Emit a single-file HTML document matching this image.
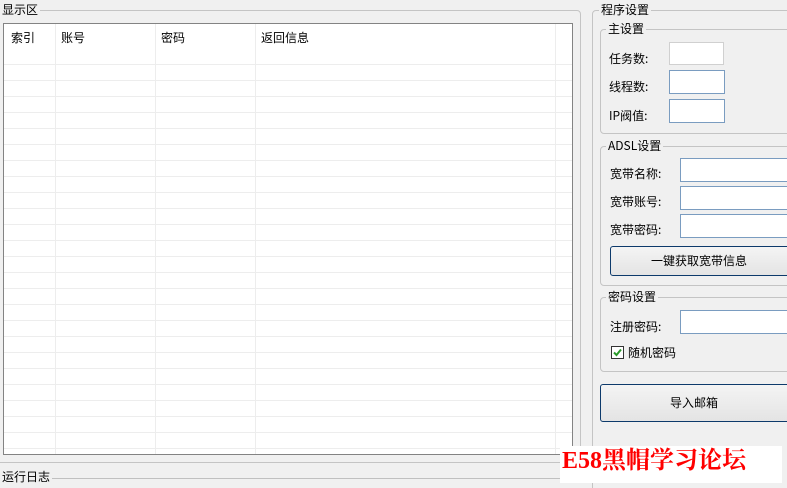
<!DOCTYPE html>
<html style="width:787px;height:488px;overflow:hidden"><head><meta charset="utf-8"><style>
*{margin:0;padding:0;box-sizing:border-box}
body{width:787px;height:488px;background:#f0f0f0;position:relative;overflow:hidden;font-family:"SimSun","Noto Sans CJK SC","WenQuanYi Zen Hei",sans-serif;font-size:12px;color:#000}
.a{position:absolute}
.grp{position:absolute;border:1px solid #c4c4c4;border-radius:4px}
.lbl{position:absolute;background:#f0f0f0;padding:0 2px;font-size:12px;line-height:14px}
.inp{position:absolute;background:#fff;border:1px solid #7a9cc0}
.btn{position:absolute;border:1px solid #0d3a6b;border-radius:3px;background:linear-gradient(#f4f4f4,#e4e4e4);text-align:center;font-size:12px}
.t{position:absolute;font-size:12px;line-height:14px}
</style></head><body>
<div class="grp" style="left:-5px;top:10px;width:586px;height:453px;border-radius:0 4px 4px 0"></div>
<div class="lbl" style="left:0;top:3px">显示区</div>
<div class="a" style="left:3px;top:23px;width:570px;height:432px;background:#fff;border:1px solid #838383;overflow:hidden">
<svg class="a" style="left:0;top:0" width="570" height="432">
<g stroke="#ededed">
<line x1="0" x2="570" y1="40.5" y2="40.5"/><line x1="0" x2="570" y1="56.5" y2="56.5"/><line x1="0" x2="570" y1="72.5" y2="72.5"/><line x1="0" x2="570" y1="88.5" y2="88.5"/><line x1="0" x2="570" y1="104.5" y2="104.5"/><line x1="0" x2="570" y1="120.5" y2="120.5"/><line x1="0" x2="570" y1="136.5" y2="136.5"/><line x1="0" x2="570" y1="152.5" y2="152.5"/><line x1="0" x2="570" y1="168.5" y2="168.5"/><line x1="0" x2="570" y1="184.5" y2="184.5"/><line x1="0" x2="570" y1="200.5" y2="200.5"/><line x1="0" x2="570" y1="216.5" y2="216.5"/><line x1="0" x2="570" y1="232.5" y2="232.5"/><line x1="0" x2="570" y1="248.5" y2="248.5"/><line x1="0" x2="570" y1="264.5" y2="264.5"/><line x1="0" x2="570" y1="280.5" y2="280.5"/><line x1="0" x2="570" y1="296.5" y2="296.5"/><line x1="0" x2="570" y1="312.5" y2="312.5"/><line x1="0" x2="570" y1="328.5" y2="328.5"/><line x1="0" x2="570" y1="344.5" y2="344.5"/><line x1="0" x2="570" y1="360.5" y2="360.5"/><line x1="0" x2="570" y1="376.5" y2="376.5"/><line x1="0" x2="570" y1="392.5" y2="392.5"/><line x1="0" x2="570" y1="408.5" y2="408.5"/><line x1="0" x2="570" y1="424.5" y2="424.5"/>
<line x1="51.5" x2="51.5" y1="0" y2="432"/><line x1="151.5" x2="151.5" y1="0" y2="432"/><line x1="251.5" x2="251.5" y1="0" y2="432"/><line x1="551.5" x2="551.5" y1="0" y2="432"/>
</g></svg>
<div class="t" style="left:7px;top:7px">索引</div>
<div class="t" style="left:57px;top:7px">账号</div>
<div class="t" style="left:157px;top:7px">密码</div>
<div class="t" style="left:257px;top:7px">返回信息</div>
</div>
<div class="a" style="left:0;top:478px;width:600px;height:1px;background:#c0c0c0"></div>
<div class="lbl" style="left:0;top:470px">运行日志</div>

<div class="grp" style="left:592px;top:10px;width:220px;height:490px"></div>
<div class="lbl" style="left:599px;top:3px">程序设置</div>
<div class="grp" style="left:600px;top:29px;width:200px;height:105px"></div>
<div class="lbl" style="left:606px;top:22px">主设置</div>
<div class="t" style="left:609px;top:52px">任务数:</div>
<div class="inp" style="left:669px;top:42px;width:55px;height:23px;border-color:#d0d0d0"></div>
<div class="t" style="left:609px;top:80px">线程数:</div>
<div class="inp" style="left:669px;top:70px;width:56px;height:24px"></div>
<div class="t" style="left:609px;top:109px">IP阀值:</div>
<div class="inp" style="left:669px;top:99px;width:56px;height:24px"></div>

<div class="grp" style="left:600px;top:146px;width:200px;height:140px"></div>
<div class="lbl" style="left:606px;top:139px">ADSL设置</div>
<div class="t" style="left:610px;top:167px">宽带名称:</div>
<div class="inp" style="left:680px;top:158px;width:120px;height:24px"></div>
<div class="t" style="left:610px;top:195px">宽带账号:</div>
<div class="inp" style="left:680px;top:186px;width:120px;height:24px"></div>
<div class="t" style="left:610px;top:223px">宽带密码:</div>
<div class="inp" style="left:680px;top:214px;width:120px;height:24px"></div>
<div class="btn" style="left:610px;top:246px;width:190px;height:30px;line-height:28px;padding-right:12px">一键获取宽带信息</div>

<div class="grp" style="left:600px;top:297px;width:200px;height:75px"></div>
<div class="lbl" style="left:606px;top:290px">密码设置</div>
<div class="t" style="left:610px;top:320px">注册密码:</div>
<div class="inp" style="left:680px;top:310px;width:120px;height:24px"></div>
<div class="a" style="left:611px;top:346px;width:13px;height:13px;border:1px solid #333;background:#fff"></div>
<svg class="a" style="left:612px;top:347px" width="11" height="11"><path d="M2 5.5 L4.5 8 L9 2.5" stroke="#2a9a2a" stroke-width="2" fill="none"/></svg>
<div class="t" style="left:628px;top:346px">随机密码</div>
<div class="btn" style="left:600px;top:384px;width:200px;height:38px;line-height:36px;padding-right:12px">导入邮箱</div>

<div class="a" style="left:560px;top:446px;width:222px;height:37px;background:#fff"></div>
<div class="a" style="left:562px;top:446px;font-family:'Liberation Serif','Noto Serif CJK SC',serif;font-size:24px;line-height:30px;color:#f00;font-weight:bold">E58黑帽学习论坛</div>
</body></html>
